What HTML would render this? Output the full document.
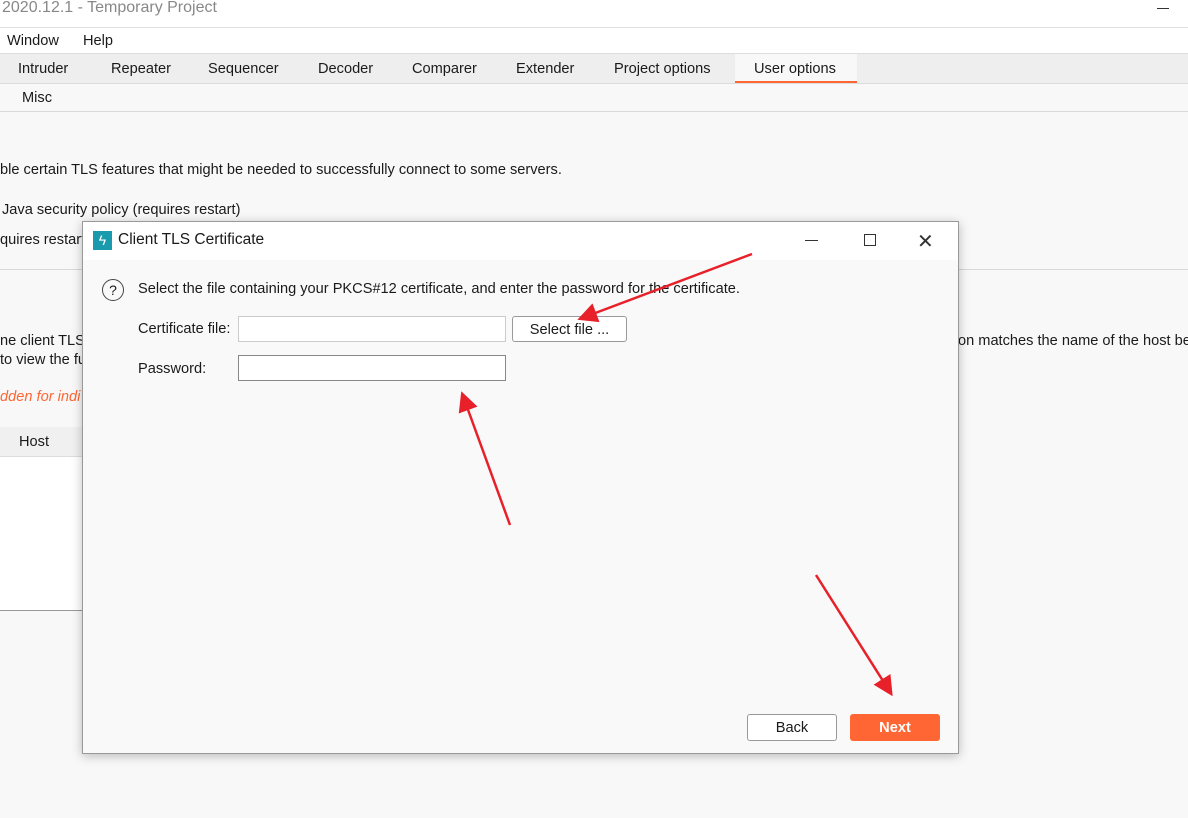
<!DOCTYPE html>
<html><head><meta charset="utf-8"><style>
body{margin:0;width:1188px;height:818px;background:#f8f8f8;font-family:"Liberation Sans",sans-serif;font-size:14.6px;color:#1a1a1a;position:relative;overflow:hidden}
.a{position:absolute;white-space:nowrap}
</style></head><body>
<div class="a" style="left:0;top:0;width:1188px;height:27px;background:#fff;border-bottom:1px solid #e0e0e0"></div>
<div class="a" style="left:2px;top:-1px;font-size:16px;color:#888">2020.12.1 - Temporary Project</div>
<div class="a" style="left:1157px;top:8px;width:12px;height:1px;background:#333"></div>
<div class="a" style="left:0;top:28px;width:1188px;height:25px;background:#fff"></div>
<div class="a" style="left:7px;top:33px">Window</div><div class="a" style="left:83px;top:33px">Help</div>
<div class="a" style="left:0;top:53px;width:1188px;height:29px;background:#eeeeee;border-top:1px solid #ddd;border-bottom:1px solid #ddd"></div>
<div class="a" style="left:735px;top:54px;width:122px;height:27px;background:#f8f8f8;border-bottom:2px solid #ff6633"></div>
<div class="a" style="left:18px;top:61px">Intruder</div>
<div class="a" style="left:111px;top:61px">Repeater</div>
<div class="a" style="left:208px;top:61px">Sequencer</div>
<div class="a" style="left:318px;top:61px">Decoder</div>
<div class="a" style="left:412px;top:61px">Comparer</div>
<div class="a" style="left:516px;top:61px">Extender</div>
<div class="a" style="left:614px;top:61px">Project options</div>
<div class="a" style="left:754px;top:61px">User options</div>
<div class="a" style="left:22px;top:90px">Misc</div>
<div class="a" style="left:0;top:111px;width:1188px;height:1px;background:#d8d8d8"></div>
<div class="a" style="left:0;top:162px">ble certain TLS features that might be needed to successfully connect to some servers.</div>
<div class="a" style="left:2px;top:202px">Java security policy (requires restart)</div>
<div class="a" style="left:0;top:232px">quires restart</div>
<div class="a" style="left:0;top:269px;width:1188px;height:1px;background:#d8d8d8"></div>
<div class="a" style="left:0;top:333px">ne client TLS</div>
<div class="a" style="left:0;top:352px">to view the fu</div>
<div class="a" style="left:958px;top:333px">on matches the name of the host be</div>
<div class="a" style="left:0;top:389px;color:#ff6633;font-style:italic">dden for indi</div>
<div class="a" style="left:0;top:427px;width:82px;height:29px;background:#f0f0f0;border-bottom:1px solid #ddd"></div>
<div class="a" style="left:19px;top:434px">Host</div>
<div class="a" style="left:0;top:457px;width:82px;height:153px;background:#fff;border-bottom:1px solid #999"></div>

<div class="a" style="left:82px;top:221px;width:875px;height:531px;background:#f9f9f9;border:1px solid #999;box-shadow:0 2px 10px rgba(0,0,0,.25)">
<div class="a" style="left:0;top:0;width:875px;height:38px;background:#fff"></div>
<div class="a" style="left:10px;top:9px;width:19px;height:19px;background:#1a9aad;color:#fff;font-size:14px;text-align:center;line-height:19px">ϟ</div>
<div class="a" style="left:35px;top:9px;font-size:15.5px">Client TLS Certificate</div>
<div class="a" style="left:722px;top:18px;width:13px;height:1px;background:#333"></div>
<div class="a" style="left:781px;top:12px;width:10px;height:10px;border:1px solid #333"></div>
<div class="a" style="left:834px;top:7px;font-size:20px;color:#333">✕</div>
<div class="a" style="left:19px;top:57px;width:20px;height:20px;border:1.5px solid #444;border-radius:50%;text-align:center;line-height:20px;font-size:14px">?</div>
<div class="a" style="left:55px;top:59px">Select the file containing your PKCS#12 certificate, and enter the password for the certificate.</div>
<div class="a" style="left:55px;top:99px">Certificate file:</div>
<div class="a" style="left:155px;top:94px;width:266px;height:24px;background:#fff;border:1px solid #ccc"></div>
<div class="a" style="left:429px;top:94px;width:113px;height:24px;background:#fff;border:1px solid #999;border-radius:3px;text-align:center;line-height:26px">Select file ...</div>
<div class="a" style="left:55px;top:139px">Password:</div>
<div class="a" style="left:155px;top:133px;width:266px;height:24px;background:#fff;border:1px solid #888"></div>
<div class="a" style="left:664px;top:492px;width:88px;height:25px;background:#fff;border:1px solid #999;border-radius:3px;text-align:center;line-height:27px">Back</div>
<div class="a" style="left:767px;top:492px;width:90px;height:27px;background:#ff6633;border-radius:3px;text-align:center;line-height:29px;color:#fff;font-weight:bold">Next</div>
</div>
<svg class="a" style="left:0;top:0" width="1188" height="818"><defs><marker id="m" markerWidth="8" markerHeight="8" refX="6" refY="4" orient="auto"><path d="M0,0L8,4L0,8z" fill="#e8202a"/></marker></defs>
<g stroke="#e8202a" stroke-width="2.5" marker-end="url(#m)"><line x1="752" y1="254" x2="582" y2="318"/><line x1="510" y1="525" x2="463" y2="396"/><line x1="816" y1="575" x2="890" y2="692"/></g></svg>
</body></html>
